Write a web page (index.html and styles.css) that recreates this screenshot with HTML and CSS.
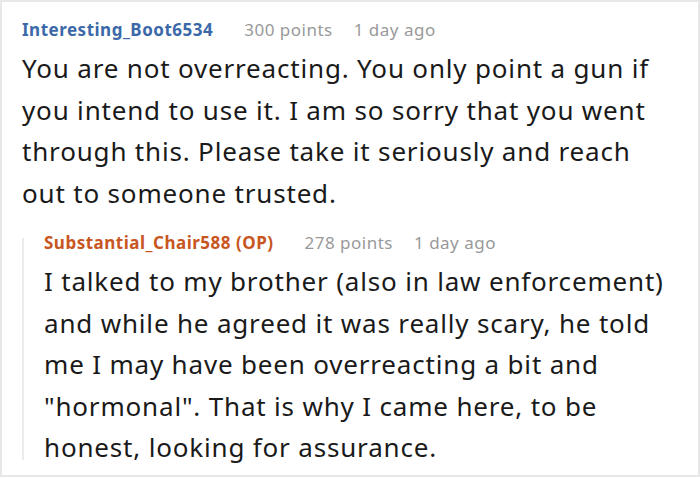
FILE: index.html
```html
<!DOCTYPE html>
<html>
<head>
<meta charset="utf-8">
<link rel="stylesheet" href="styles.css">
</head>
<body>
<div class="frame">
  <div class="comment">
    <div class="meta">
      <span class="user blue">Interesting_Boot6534</span>
      <span class="pts">300 points</span>
      <span class="time">1 day ago</span>
    </div>
    <p class="body">You are not overreacting. You only point a gun if you intend to use it. I am so sorry that you went through this. Please take it seriously and reach out to someone trusted.</p>
    <div class="reply">
      <div class="meta">
        <span class="user orange">Substantial_Chair588 (OP)</span>
        <span class="pts">278 points</span>
        <span class="time">1 day ago</span>
      </div>
      <p class="body">I talked to my brother (also in law enforcement) and while he agreed it was really scary, he told me I may have been overreacting a bit and "hormonal". That is why I came here, to be honest, looking for assurance.</p>
    </div>
  </div>
</div>
</body>
</html>
```
FILE: styles.css
```css
html, body { margin: 0; padding: 0; background: #fff; }
body { font-family: "Noto Sans", sans-serif; color: #1a1a1a; }
.frame {
  width: 700px; height: 477px; box-sizing: border-box;
  border: 2px solid #e8e8e8;
  padding: 16px 20px 0 20px; overflow: hidden;
}
.meta { display: flex; align-items: baseline; font-size: 17px; line-height: 24px; letter-spacing: 0.5px; }
.user { font-weight: 700; margin-right: 31px; }
.blue { color: #3b68a8; }
.orange { color: #c8561f; }
.pts { color: #999; margin-right: 21px; }
.time { color: #999; }
.body { margin: 6px 0 0 0; font-size: 26px; line-height: 41.5px; letter-spacing: 0.82px; }
.reply { position: relative; margin: 17px 0 0 0; padding-left: 22px; }
.reply::before {
  content: ""; position: absolute; left: 0; top: 7px; bottom: 9px;
  width: 2px; background: #ececec;
}
```
